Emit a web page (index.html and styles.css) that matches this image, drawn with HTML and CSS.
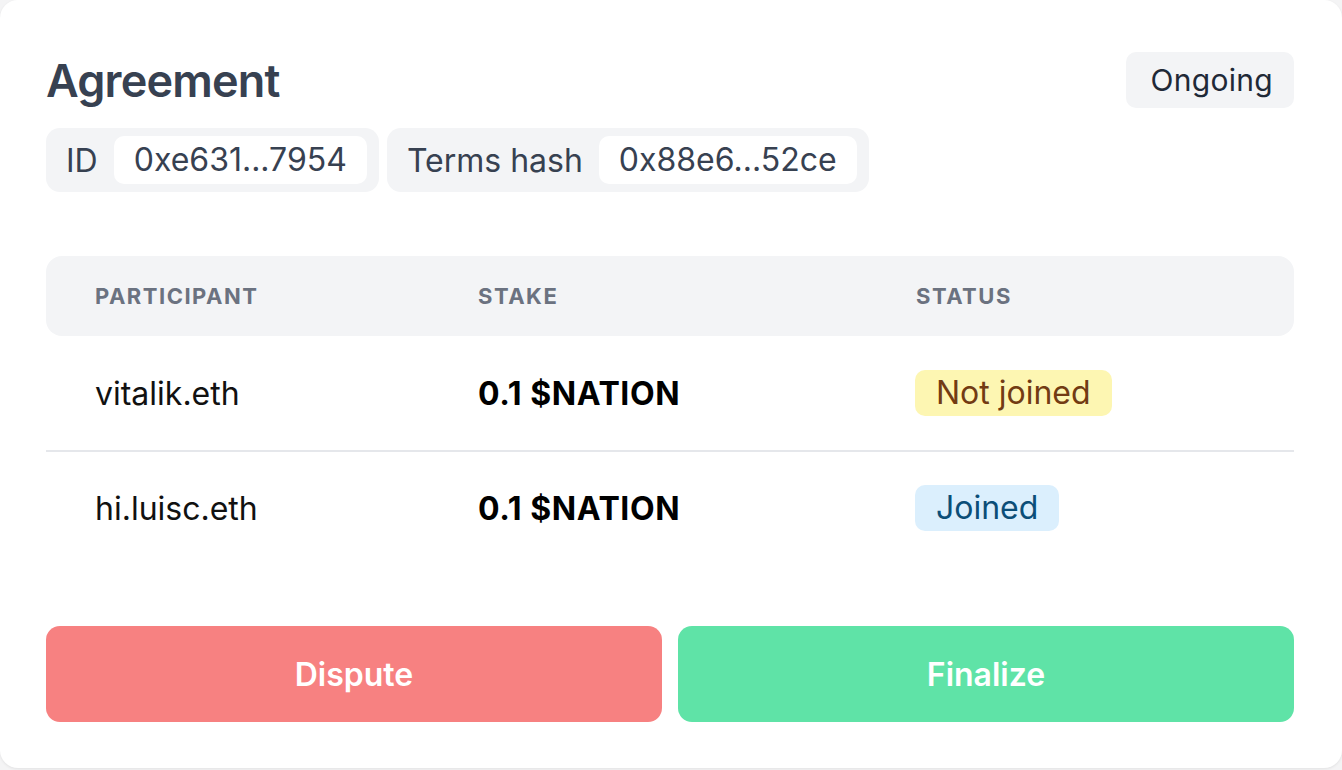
FILE: index.html
```html
<!DOCTYPE html>
<html>
<head>
<meta charset="utf-8">
<link rel="stylesheet" href="styles.css">
</head>
<body>
<div class="card">
  <div class="head">
    <h1 class="title">Agreement</h1>
    <span class="state">Ongoing</span>
  </div>
  <div class="chips">
    <div class="chip"><span class="chip-label">ID</span><span class="chip-value">0xe631...7954</span></div>
    <div class="chip"><span class="chip-label">Terms hash</span><span class="chip-value">0x88e6...52ce</span></div>
  </div>
  <div class="table">
    <div class="thead">
      <div class="th">Participant</div>
      <div class="th">Stake</div>
      <div class="th">Status</div>
    </div>
    <div class="row">
      <div class="td">vitalik.eth</div>
      <div class="td stake">0.1 $NATION</div>
      <div class="td"><span class="badge badge-yellow">Not joined</span></div>
    </div>
    <div class="row">
      <div class="td">hi.luisc.eth</div>
      <div class="td stake">0.1 $NATION</div>
      <div class="td"><span class="badge badge-blue">Joined</span></div>
    </div>
  </div>
  <div class="actions">
    <button class="btn btn-red">Dispute</button>
    <button class="btn btn-green">Finalize</button>
  </div>
</div>
</body>
</html>
```
FILE: styles.css
```css
* { box-sizing: border-box; }
html, body { margin: 0; padding: 0; }
body {
  background: #f4f4f5;
  font-family: Inter, "Noto Sans", sans-serif;
  width: 1342px;
  height: 770px;
}
.card {
  width: 1342px;
  height: 768px;
  background: #ffffff;
  border-radius: 18px;
  box-shadow: 0 1px 3px rgba(0,0,0,0.08);
  padding: 52px 48px 0 46px;
}
.head {
  display: flex;
  justify-content: space-between;
  align-items: flex-start;
  height: 76px;
}
.title {
  margin: 4px 0 0 0;
  font-size: 45px;
  font-weight: 600;
  color: #374151;
  letter-spacing: -0.8px;
  line-height: 50px;
}
.state {
  background: #f3f4f6;
  color: #1f2937;
  font-size: 30px;
  line-height: 56px;
  height: 56px;
  padding: 0 21px 0 24px;
  border-radius: 10px;
  letter-spacing: 0.3px;
}
.chips {
  display: flex;
  gap: 8px;
}
.chip {
  display: flex;
  align-items: center;
  background: #f3f4f6;
  border-radius: 14px;
  padding: 8px 12px 8px 20px;
  gap: 16px;
  color: #374151;
  font-size: 32px;
}
.chip-value {
  background: #ffffff;
  border-radius: 10px;
  height: 48px;
  line-height: 48px;
  padding: 0 20px;
}
.table {
  margin-top: 64px;
}
.thead, .row {
  display: grid;
  grid-template-columns: 383px 438px 1fr;
}
.thead {
  background: #f3f4f6;
  border-radius: 16px;
  height: 80px;
  align-items: center;
}
.th {
  padding-left: 49px;
  font-size: 22px;
  font-weight: 700;
  letter-spacing: 1.5px;
  text-transform: uppercase;
  color: #6b7280;
}
.row {
  height: 114px;
  align-items: center;
}
.row + .row {
  border-top: 2px solid #e5e7eb;
}
.td {
  padding-left: 49px;
  font-size: 32px;
  color: #111111;
}
.stake {
  font-weight: 700;
  color: #000000;
  font-size: 32px;
  letter-spacing: 0.6px;
}
.badge {
  display: inline-block;
  height: 46px;
  line-height: 46px;
  padding: 0 21px;
  border-radius: 10px;
  font-size: 32px;
  margin-left: -1px;
}
.badge-yellow { background: #fdf6b2; color: #723b13; }
.badge-blue { background: #dbeffd; color: #0b4e78; }
.actions {
  display: flex;
  gap: 16px;
  margin-top: 62px;
}
.btn {
  flex: 1;
  height: 96px;
  border: 0;
  border-radius: 14px;
  font-family: inherit;
  font-size: 32px;
  font-weight: 600;
  color: #ffffff;
}
.btn-red { background: #f78181; }
.btn-green { background: #5fe3a7; }
```
